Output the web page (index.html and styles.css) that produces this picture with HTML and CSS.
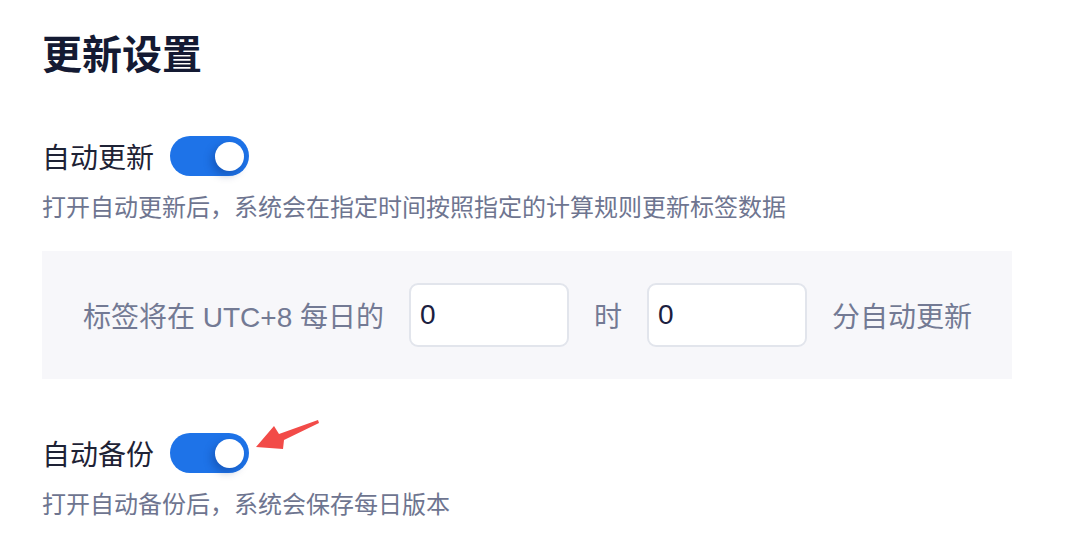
FILE: index.html
```html
<!DOCTYPE html>
<html lang="zh-CN">
<head>
<meta charset="utf-8">
<link rel="stylesheet" href="styles.css">
</head>
<body>
<div class="page">
  <h1 class="title">更新设置</h1>

  <section class="setting">
    <div class="setting-head">
      <span class="label">自动更新</span>
      <span class="switch"><span class="knob"></span></span>
    </div>
    <p class="desc">打开自动更新后，系统会在指定时间按照指定的计算规则更新标签数据</p>
    <div class="schedule">
      <span class="sch-text">标签将在 UTC+8 每日的</span>
      <input class="num" type="text" value="0">
      <span class="sch-text">时</span>
      <input class="num" type="text" value="0">
      <span class="sch-text">分自动更新</span>
    </div>
  </section>

  <section class="setting setting-backup">
    <div class="setting-head">
      <span class="label">自动备份</span>
      <span class="switch"><span class="knob"></span></span>
      <svg class="arrow" width="70" height="36" viewBox="0 0 70 36">
        <polygon points="0,27 18,6 23,14 62,0 63,3 28,20 27,29" fill="#f24b48"/>
      </svg>
    </div>
    <p class="desc">打开自动备份后，系统会保存每日版本</p>
  </section>
</div>
</body>
</html>
```
FILE: styles.css
```css
* { box-sizing: border-box; }
html, body { margin: 0; padding: 0; background: #ffffff; }
body {
  font-family: "Noto Sans CJK SC", "Noto Sans", sans-serif;
  width: 1074px;
  height: 540px;
  overflow: hidden;
}
.page {
  padding: 22px 0 0 42px;
}
.title {
  margin: 0;
  font-size: 40px;
  line-height: 60px;
  font-weight: 700;
  color: #141a33;
}
.setting { margin-top: 54px; }
.setting-backup { margin-top: 54px; }
.setting-head {
  display: flex;
  align-items: center;
  height: 40px;
  position: relative;
}
.label {
  font-size: 28px;
  line-height: 40px;
  color: #1e2235;
  margin-right: 16px;
}
.switch {
  width: 79px;
  height: 40px;
  border-radius: 20px;
  background: #1e73e8;
  position: relative;
  display: inline-block;
}
.knob {
  position: absolute;
  top: 6px;
  right: 5px;
  width: 29px;
  height: 29px;
  border-radius: 50%;
  background: #ffffff;
  box-shadow: -3px 4px 8px rgba(10, 40, 110, 0.35);
}
.arrow {
  position: absolute;
  left: 214px;
  top: -13px;
}
.desc {
  margin: 12px 0 0 0;
  font-size: 24px;
  line-height: 36px;
  color: #6e7590;
}
.schedule {
  margin: 27px 0 0 0;
  width: 970px;
  height: 128px;
  background: #f7f7fa;
  display: flex;
  align-items: center;
  padding-left: 41px;
}
.sch-text {
  font-family: "Liberation Sans", "Noto Sans CJK SC", sans-serif;
  font-size: 28px;
  color: #737a94;
  white-space: nowrap;
}
.num {
  width: 160px;
  height: 64px;
  border: 2px solid #e2e5ec;
  border-radius: 9px;
  background: #ffffff;
  font-family: "Liberation Sans", "Noto Sans CJK SC", sans-serif;
  font-size: 28px;
  color: #1b2040;
  padding: 0 0 0 9px;
  margin: 0 25px;
  outline: none;
}
```
